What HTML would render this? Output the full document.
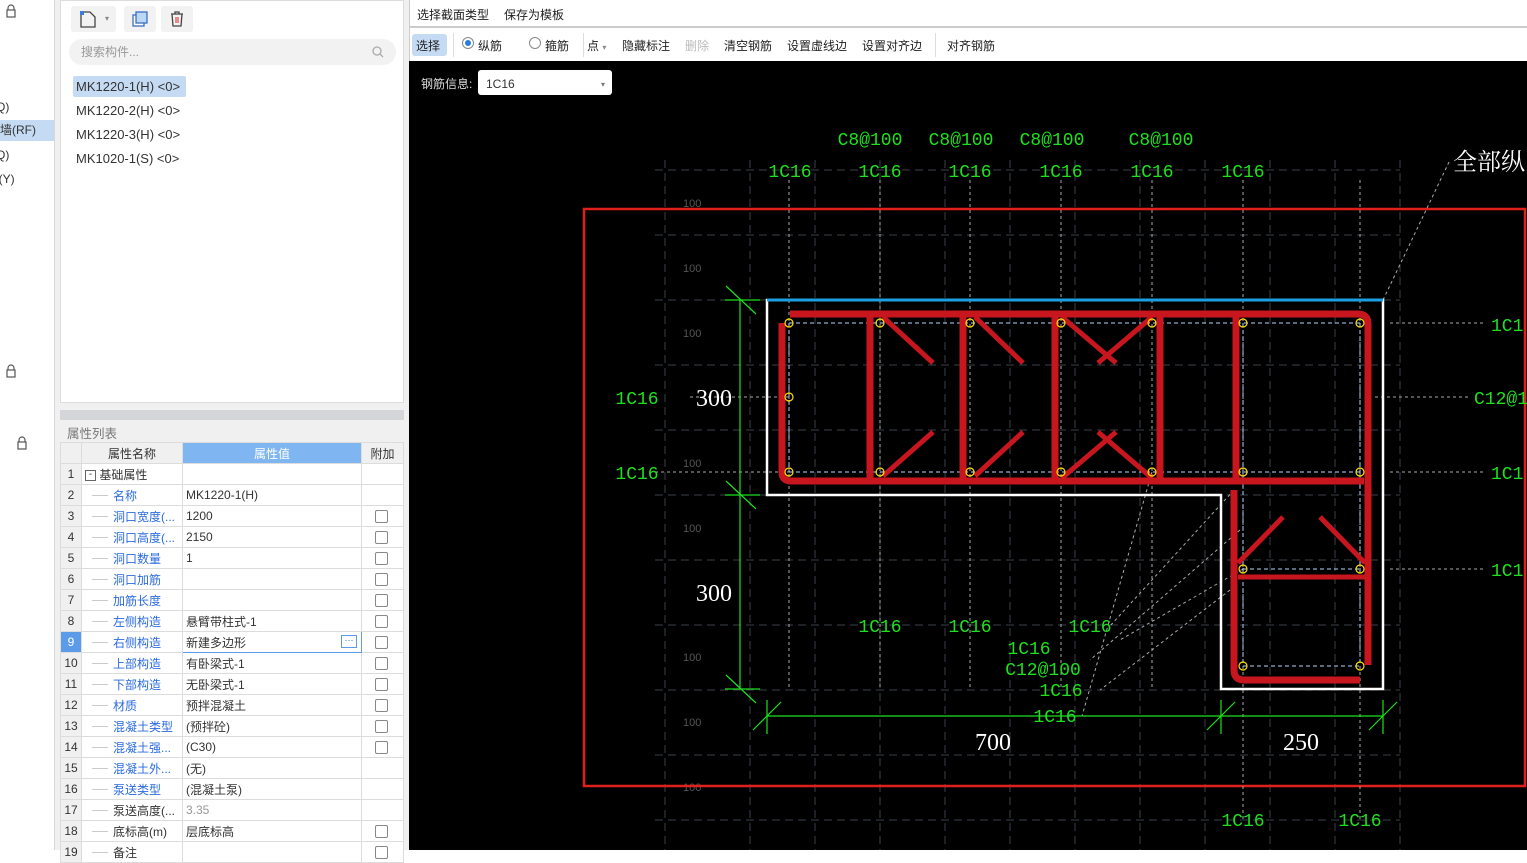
<!DOCTYPE html>
<html><head><meta charset="utf-8"><style>
*{margin:0;padding:0;box-sizing:border-box}
body{width:1527px;height:850px;overflow:hidden;background:#fff;font-family:"Liberation Sans","Noto Sans CJK SC",sans-serif;font-size:12px;color:#333;position:relative}
.a{position:absolute}
.lt{left:0;top:0;width:55px;height:850px;background:#fff;border-right:1px solid #d8d8d8}
.mid{left:55px;top:0;width:354px;height:850px;background:#f0f0f0}
table{border-collapse:collapse;table-layout:fixed}
td{height:21px;border:1px solid #dcdcdc;font-size:12px;white-space:nowrap;overflow:hidden;padding:0 3px;background:#fff}
td.n{background:#f0f0f0;text-align:center;color:#333}
td.k{color:#2a6be0;padding-left:31px;position:relative}
td.k:before{content:"";position:absolute;left:10px;top:10px;width:16px;border-top:1px solid #ccc}
.cb{display:inline-block;width:13px;height:13px;border:1px solid #888;border-radius:2px;margin-left:10px;vertical-align:middle}
.tb span{position:absolute;top:38px;font-size:12px;color:#222}
</style></head><body>
<div class="a lt">
<svg class="a" style="left:5px;top:4px" width="12" height="14"><path d="M3 6V4a3 3 0 0 1 6 0v2" fill="none" stroke="#555" stroke-width="1.2"/><rect x="2" y="6" width="8" height="7" fill="none" stroke="#555" stroke-width="1.2"/></svg>
<svg class="a" style="left:5px;top:364px" width="12" height="14"><path d="M3 6V4a3 3 0 0 1 6 0v2" fill="none" stroke="#555" stroke-width="1.2"/><rect x="2" y="6" width="8" height="7" fill="none" stroke="#555" stroke-width="1.2"/></svg>
<svg class="a" style="left:16px;top:436px" width="12" height="14"><path d="M3 6V4a3 3 0 0 1 6 0v2" fill="none" stroke="#555" stroke-width="1.2"/><rect x="2" y="6" width="8" height="7" fill="none" stroke="#555" stroke-width="1.2"/></svg>
<div class="a" style="left:-4px;top:100px">Q)</div>
<div class="a" style="left:0;top:120px;width:54px;height:21px;background:#c5dbf3;line-height:21px">墙(RF)</div>
<div class="a" style="left:-4px;top:148px">Q)</div>
<div class="a" style="left:-4px;top:172px">i(Y)</div>
<div class="a" style="left:-4px;top:196px">)</div>
</div>
<div class="a mid">
<div class="a" style="left:5px;top:0;width:344px;height:403px;background:#fff;border:1px solid #ddd">
<div class="a" style="left:10px;top:5px;width:45px;height:26px;background:#f2f2f2;border-radius:3px"></div>
<svg class="a" style="left:18px;top:9px" width="18" height="18"><path d="M2 2h9l5 5v10H2z" fill="none" stroke="#444" stroke-width="1.3"/><rect x="1" y="1" width="4" height="4" fill="#3a7de0"/></svg>
<div class="a" style="left:44px;top:13px;font-size:8px;color:#888">▾</div>
<div class="a" style="left:63px;top:5px;width:32px;height:26px;background:#f2f2f2;border-radius:3px"></div>
<svg class="a" style="left:70px;top:9px" width="18" height="18"><rect x="2" y="5" width="11" height="11" fill="#fff" stroke="#3a6fc0" stroke-width="1.3"/><rect x="5" y="2" width="11" height="11" fill="#bcd6f5" stroke="#3a6fc0" stroke-width="1.3"/></svg>
<div class="a" style="left:100px;top:5px;width:32px;height:26px;background:#f2f2f2;border-radius:3px"></div>
<svg class="a" style="left:108px;top:9px" width="16" height="18"><path d="M2 4h12M6 4V2h4v2M3 4l1 12h8l1-12" fill="none" stroke="#444" stroke-width="1.3"/><path d="M7 7v6M9 7v6" stroke="#d22" stroke-width="1"/></svg>
<div class="a" style="left:8px;top:38px;width:327px;height:26px;background:#f2f2f2;border-radius:13px;color:#999;line-height:26px;padding-left:12px">搜索构件...</div>
<svg class="a" style="left:310px;top:44px" width="14" height="14"><circle cx="6" cy="6" r="4" fill="none" stroke="#aaa" stroke-width="1.3"/><path d="M9 9l3 3" stroke="#aaa" stroke-width="1.3"/></svg>
<div class="a" style="left:12px;top:75px;width:113px;height:21px;background:#c5dbf3;border-radius:2px"></div>
<div class="a" style="left:15px;top:78px;font-size:13px">MK1220-1(H) &lt;0&gt;</div>
<div class="a" style="left:15px;top:102px;font-size:13px">MK1220-2(H) &lt;0&gt;</div>
<div class="a" style="left:15px;top:126px;font-size:13px">MK1220-3(H) &lt;0&gt;</div>
<div class="a" style="left:15px;top:150px;font-size:13px">MK1020-1(S) &lt;0&gt;</div>
</div>
<div class="a" style="left:5px;top:410px;width:344px;height:10px;background:#d4d6da"></div>
<div class="a" style="left:12px;top:423px;color:#777;font-size:12.5px">属性列表</div>
<table class="a" style="left:5px;top:442px;width:343px">
<col style="width:21px"><col style="width:101px"><col style="width:179px"><col style="width:42px">
<tr><td class="n"></td><td style="text-align:center;background:#f0f0f0">属性名称</td><td style="text-align:center;background:#7fb6f2;color:#fff">属性值</td><td style="text-align:center;background:#f0f0f0">附加</td></tr>
<tr><td class="n">1</td><td><span style="display:inline-block;width:11px;height:11px;border:1px solid #666;font-size:10px;line-height:8px;text-align:center;vertical-align:middle">-</span> 基础属性</td><td></td><td></td></tr>
<tr><td class="n">2</td><td class="k">名称</td><td>MK1220-1(H)</td><td></td></tr>
<tr><td class="n">3</td><td class="k">洞口宽度(...</td><td>1200</td><td><span class="cb"></span></td></tr>
<tr><td class="n">4</td><td class="k">洞口高度(...</td><td>2150</td><td><span class="cb"></span></td></tr>
<tr><td class="n">5</td><td class="k">洞口数量</td><td>1</td><td><span class="cb"></span></td></tr>
<tr><td class="n">6</td><td class="k">洞口加筋</td><td></td><td><span class="cb"></span></td></tr>
<tr><td class="n">7</td><td class="k">加筋长度</td><td></td><td><span class="cb"></span></td></tr>
<tr><td class="n">8</td><td class="k">左侧构造</td><td>悬臂带柱式-1</td><td><span class="cb"></span></td></tr>
<tr><td class="n" style="background:#5b9be8;color:#fff">9</td><td class="k">右侧构造</td><td style="border:1px solid #5b9be8;position:relative">新建多边形<span style="position:absolute;right:4px;top:3px;width:16px;height:13px;border:1px solid #5b9be8;font-size:9px;line-height:9px;text-align:center;color:#3a6fc0">···</span></td><td><span class="cb"></span></td></tr>
<tr><td class="n">10</td><td class="k">上部构造</td><td>有卧梁式-1</td><td><span class="cb"></span></td></tr>
<tr><td class="n">11</td><td class="k">下部构造</td><td>无卧梁式-1</td><td><span class="cb"></span></td></tr>
<tr><td class="n">12</td><td class="k">材质</td><td>预拌混凝土</td><td><span class="cb"></span></td></tr>
<tr><td class="n">13</td><td class="k">混凝土类型</td><td>(预拌砼)</td><td><span class="cb"></span></td></tr>
<tr><td class="n">14</td><td class="k">混凝土强...</td><td>(C30)</td><td><span class="cb"></span></td></tr>
<tr><td class="n">15</td><td class="k">混凝土外...</td><td>(无)</td><td></td></tr>
<tr><td class="n">16</td><td class="k">泵送类型</td><td>(混凝土泵)</td><td></td></tr>
<tr><td class="n">17</td><td class="k" style="color:#333">泵送高度(...</td><td style="color:#999">3.35</td><td></td></tr>
<tr><td class="n">18</td><td class="k" style="color:#333">底标高(m)</td><td>层底标高</td><td><span class="cb"></span></td></tr>
<tr><td class="n">19</td><td class="k" style="color:#333">备注</td><td></td><td><span class="cb"></span></td></tr>
</table>
</div>
<div class="a" style="left:409px;top:0;width:1118px;height:61px;background:#fff;border-left:1px solid #ccc">
<div class="a" style="left:7px;top:6px;font-size:12px;color:#222">选择截面类型</div>
<div class="a" style="left:94px;top:6px;font-size:12px;color:#222">保存为模板</div>
<div class="a" style="left:0;top:26px;width:1118px;height:2px;background:#ccc"></div>
<div class="a" style="left:2px;top:34px;width:35px;height:22px;background:#c5dbf3;border-radius:3px"></div>
<div class="a" style="left:43px;top:33px;width:1px;height:24px;background:#ddd"></div>
<div class="a" style="left:173px;top:33px;width:1px;height:24px;background:#ddd"></div>
<div class="a" style="left:525px;top:33px;width:1px;height:24px;background:#ddd"></div>
<div class="a" style="left:52px;top:37px;width:12px;height:12px;border:1px solid #888;border-radius:50%"><div style="margin:2px;width:6px;height:6px;border-radius:50%;background:#2a7de0"></div></div>
<div class="a" style="left:119px;top:37px;width:12px;height:12px;border:1px solid #888;border-radius:50%"></div>
</div>
<div class="tb">
<span style="left:416px;top:37px">选择</span><span style="left:478px;top:37px">纵筋</span><span style="left:545px;top:37px">箍筋</span>
<span style="left:587px;top:37px">点 <small style="font-size:8px;color:#888">▾</small></span><span style="left:622px;top:37px">隐藏标注</span><span style="left:685px;top:37px;color:#bbb">删除</span>
<span style="left:724px;top:37px">清空钢筋</span><span style="left:787px;top:37px">设置虚线边</span><span style="left:862px;top:37px">设置对齐边</span><span style="left:947px;top:37px">对齐钢筋</span>
</div>
<svg class="a" style="left:409px;top:61px" width="1118" height="789" viewBox="409 61 1118 789">
<rect x="409" y="61" width="1118" height="789" fill="#000"/>
<text x="421" y="88" fill="#ddd" font-size="12" font-family="Liberation Sans,Noto Sans CJK SC,sans-serif">钢筋信息:</text>
<rect x="478" y="70" width="134" height="25" rx="3" fill="#fff"/>
<text x="486" y="88" fill="#333" font-size="12" font-family="Liberation Sans,sans-serif">1C16</text>
<text x="601" y="87" fill="#777" font-size="8">▾</text>
<g stroke="#3a3f4a" stroke-width="1" stroke-dasharray="8,5">
<path d="M655 170H1400M655 235H1400M655 300H1400M655 365H1400M655 430H1400M655 495H1400M655 560H1400M655 625H1400M655 690H1400M655 755H1400M655 820H1400"/>
<path d="M665 160V850M750 160V850M815 160V850M880 160V850M945 160V850M1010 160V850M1075 160V850M1140 160V850M1205 160V850M1270 160V850M1335 160V850M1400 160V850"/>
</g>
<g fill="#555" font-size="11" font-family="Liberation Sans,sans-serif"><text x="683" y="207">100</text><text x="683" y="272">100</text><text x="683" y="337">100</text><text x="683" y="467">100</text><text x="683" y="532">100</text><text x="683" y="661">100</text><text x="683" y="726">100</text><text x="683" y="791">100</text></g>
<rect x="584" y="209" width="941" height="577" fill="none" stroke="#e0201c" stroke-width="2.5"/>
<g stroke="#aaa" stroke-width="1" stroke-dasharray="3,3" fill="none">
<path d="M880 180V690M970 180V690M1061 180V690M1152 180V690M1243 180V820M1360 180V820M789 180V690"/>
<path d="M1383 300L1450 160M1152 472L1082 716M1234 490L1110 626M1240 530L1090 660M1243 569L1120 640M1230 590L1100 690"/>
<path d="M1390 323H1485M1375 397H1470M1390 472H1485M1390 569H1485M690 397H789M655 472H789"/>
</g>
<g stroke="#b8d4ff" stroke-width="1" stroke-dasharray="4,3"><path d="M789 323H1360M789 472H1360M1243 569H1360M1243 666H1360M789 323V472M1360 323V666M1243 323V666"/></g>
<path d="M767 495V300H1383V689H1221V495Z" fill="none" stroke="#fff" stroke-width="2.5"/>
<path d="M767 300H1383" stroke="#1ba1e2" stroke-width="3"/>
<g stroke="#c8161f" stroke-width="7" fill="none" stroke-linejoin="round">
<path d="M790 314H1358Q1368 314 1368 324V665"/>
<path d="M782 323V472Q782 481 791 481H1364"/>
<path d="M1234 490V670Q1234 680 1244 680H1360"/>
<path d="M870 314V481M963 314V481M1055 314V481M1160 314V481M1236 314V481"/>
<path d="M1238 577H1368" stroke-width="5"/>
</g>
<g stroke="#c8161f" stroke-width="5">
<path d="M883 317L933 363M933 432L883 476M975 317L1023 363M1023 432L975 476M1062 317L1116 363M1152 317L1098 363M1098 432L1152 478M1116 432L1062 478M1283 517L1238 563M1320 517L1365 563"/>
</g>
<g fill="none" stroke="#ffe000" stroke-width="1.2">
<circle cx="789" cy="323" r="4"/><circle cx="880" cy="323" r="4"/><circle cx="970" cy="323" r="4"/><circle cx="1061" cy="323" r="4"/><circle cx="1152" cy="323" r="4"/><circle cx="1243" cy="323" r="4"/><circle cx="1360" cy="323" r="4"/>
<circle cx="789" cy="397" r="4"/>
<circle cx="789" cy="472" r="4"/><circle cx="880" cy="472" r="4"/><circle cx="970" cy="472" r="4"/><circle cx="1061" cy="472" r="4"/><circle cx="1152" cy="472" r="4"/><circle cx="1243" cy="472" r="4"/><circle cx="1360" cy="472" r="4"/>
<circle cx="1243" cy="569" r="4"/><circle cx="1360" cy="569" r="4"/><circle cx="1243" cy="666" r="4"/><circle cx="1360" cy="666" r="4"/>
</g>
<g stroke="#1ee01e" stroke-width="1.2">
<path d="M740 300V689M725 300H760M725 495H760M725 689H760M726 286L756 314M726 481L756 509M726 675L756 703"/>
<path d="M767 716H1383M767 700V734M1221 700V734M1383 700V734M753 730L781 702M1207 730L1235 702M1369 730L1397 702"/>
</g>
<g fill="#1ee01e" font-size="18" font-family="Liberation Mono,monospace" text-anchor="middle">
<text x="870" y="145">C8@100</text><text x="961" y="145">C8@100</text><text x="1052" y="145">C8@100</text><text x="1161" y="145">C8@100</text>
<text x="790" y="177">1C16</text><text x="880" y="177">1C16</text><text x="970" y="177">1C16</text><text x="1061" y="177">1C16</text><text x="1152" y="177">1C16</text><text x="1243" y="177">1C16</text>
<text x="637" y="404">1C16</text><text x="637" y="479">1C16</text>
<text x="880" y="632">1C16</text><text x="970" y="632">1C16</text><text x="1090" y="632">1C16</text><text x="1029" y="654">1C16</text><text x="1043" y="675">C12@100</text><text x="1061" y="696">1C16</text><text x="1055" y="722">1C16</text>
<text x="1243" y="826">1C16</text><text x="1360" y="826">1C16</text>
<text x="1491" y="331" text-anchor="start">1C1</text><text x="1474" y="404" text-anchor="start">C12@1</text><text x="1491" y="479" text-anchor="start">1C1</text><text x="1491" y="576" text-anchor="start">1C1</text>
</g>
<g fill="#fff" font-size="24" font-family="Liberation Serif,serif" text-anchor="middle">
<text x="714" y="406">300</text><text x="714" y="601">300</text><text x="993" y="750">700</text><text x="1301" y="750">250</text>
</g>
<text x="1453" y="170" fill="#fff" font-size="24" font-family="Noto Serif CJK SC,serif">全部纵</text>
</svg>
</body></html>
